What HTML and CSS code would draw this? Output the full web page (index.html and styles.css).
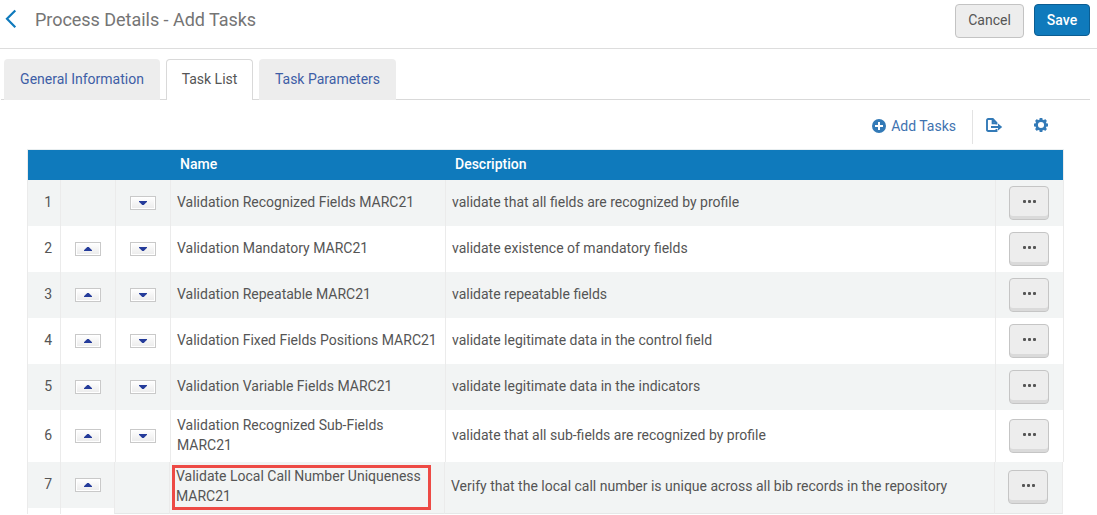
FILE: index.html
```
<!DOCTYPE html>
<html lang="en">
<head>
    <meta charset="UTF-8">
    <meta name="viewport" content="width=device-width, initial-scale=1.0">
    <title>Process Details - Add Tasks</title>
    <link rel="stylesheet" href="styles.css">
</head>
<body>
    <header class="page-header">
        <svg class="back" width="12" height="20" viewBox="0 0 12 20"><path d="M10.3 1.5 2 9.8l8.3 8.4" fill="none" stroke="#0f7abc" stroke-width="2.2"/></svg>
        <h1>Process Details - Add Tasks</h1>
        <button class="btn cancel">Cancel</button>
        <button class="btn save">Save</button>
    </header>

    <nav class="tabs">
        <a class="tab general">General Information</a>
        <a class="tab active">Task List</a>
        <a class="tab params">Task Parameters</a>
    </nav>

    <div class="toolbar">
        <a class="add-tasks">
            <svg width="14" height="14" viewBox="0 0 14 14"><circle cx="7" cy="7" r="7" fill="#337ab7"/><path d="M7 3v8M3 7h8" stroke="#fff" stroke-width="2"/></svg>
            <span>Add Tasks</span>
        </a>
        <svg class="export" width="17" height="15" viewBox="0 0 17 15"><path d="M10.5 11v2H2.2Q1 13 1 11.8V2.2Q1 1 2.2 1h4.6L10.5 4.8V6.5M6.6 1v4.3h4" fill="none" stroke="#337ab7" stroke-width="1.9"/><path d="M5 9h8" stroke="#337ab7" stroke-width="2"/><path d="M12 5.6 16.2 9 12 12.4z" fill="#337ab7"/></svg>
        <svg class="gear" width="14" height="14" viewBox="0 0 14 14"><circle cx="7" cy="7" r="4.4" fill="none" stroke="#337ab7" stroke-width="2.7"/><path d="M5.6 0h2.8v2.5H5.600zM5.600 11.500h2.800V14H5.600zM0 5.600h2.500v2.800H0zM11.500 5.600H14v2.800h-2.500zM1 2.900 2.900 1l2 2L3 4.900zM9.100 3l2-2L13 2.900l-2 2zM1 11.100l2-2L4.900 11l-2 2zM11 9.100l2 2-1.900 1.900-2-2z" fill="#337ab7"/></svg>
    </div>

    <main class="task-table">
        <div class="row head">
            <div></div><div></div><div></div>
            <div>Name</div>
            <div>Description</div>
            <div></div>
        </div>
        <div class="row odd">
            <div class="num">1</div>
            <div class="move"></div>
            <div class="move"><button class="arrow down"></button></div>
            <div class="text">Validation Recognized Fields MARC21</div>
            <div class="text">validate that all fields are recognized by profile</div>
            <div class="actions"><button class="more"><i></i><i></i><i></i></button></div>
        </div>
        <div class="row">
            <div class="num">2</div>
            <div class="move"><button class="arrow up"></button></div>
            <div class="move"><button class="arrow down"></button></div>
            <div class="text">Validation Mandatory MARC21</div>
            <div class="text">validate existence of mandatory fields</div>
            <div class="actions"><button class="more"><i></i><i></i><i></i></button></div>
        </div>
        <div class="row odd">
            <div class="num">3</div>
            <div class="move"><button class="arrow up"></button></div>
            <div class="move"><button class="arrow down"></button></div>
            <div class="text">Validation Repeatable MARC21</div>
            <div class="text">validate repeatable fields</div>
            <div class="actions"><button class="more"><i></i><i></i><i></i></button></div>
        </div>
        <div class="row">
            <div class="num">4</div>
            <div class="move"><button class="arrow up"></button></div>
            <div class="move"><button class="arrow down"></button></div>
            <div class="text">Validation Fixed Fields Positions MARC21</div>
            <div class="text">validate legitimate data in the control field</div>
            <div class="actions"><button class="more"><i></i><i></i><i></i></button></div>
        </div>
        <div class="row odd">
            <div class="num">5</div>
            <div class="move"><button class="arrow up"></button></div>
            <div class="move"><button class="arrow down"></button></div>
            <div class="text">Validation Variable Fields MARC21</div>
            <div class="text">validate legitimate data in the indicators</div>
            <div class="actions"><button class="more"><i></i><i></i><i></i></button></div>
        </div>
        <div class="row tall">
            <div class="num">6</div>
            <div class="move"><button class="arrow up"></button></div>
            <div class="move"><button class="arrow down"></button></div>
            <div class="text">Validation Recognized Sub-Fields<br>MARC21</div>
            <div class="text">validate that all sub-fields are recognized by profile</div>
            <div class="actions"><button class="more"><i></i><i></i><i></i></button></div>
        </div>
        <div class="row odd tall last">
            <div class="num short">7</div>
            <div class="move short"><button class="arrow up"></button></div>
            <div class="move"></div>
            <div class="text marked"><span class="highlight">Validate Local Call Number Uniqueness<br>MARC21</span></div>
            <div class="text">Verify that the local call number is unique across all bib records in the repository</div>
            <div class="actions"><button class="more"><i></i><i></i><i></i></button></div>
        </div>
    </main>
</body>
</html>
```

FILE: styles.css
```
* { box-sizing: border-box; }

body {
    margin: 0; background: #fff; color: #555;
    font-family: Roboto, "Liberation Sans", sans-serif;
    font-size: 14px; line-height: 20px;
    height: 515px; overflow: hidden;
}
button { font: inherit; padding: 0; margin: 0; }
svg { display: block; flex: none; }

.page-header {
    display: flex; align-items: flex-start;
    height: 49px; padding: 4px 7px 0 5px;
    border-bottom: 1px solid #ddd;
}
.back { margin-top: 5px; }
h1 {
    margin: 4px auto 0 18px; font-size: 18px; line-height: 24px;
    font-weight: 400; color: #757575; white-space: nowrap;
    letter-spacing: -0.03px;
}
.btn { border-radius: 4px; }
.cancel {
    width: 69px; height: 34px; margin-right: 10px; padding-bottom: 2px;
    background: #ededed; border: 1px solid #c3c3c3; color: #555;
}
.save {
    width: 56px; height: 32px; font-weight: 500;
    background: #0f7abc; border: 1px solid #0b5d92; color: #fff;
}

.tabs {
    display: flex; height: 51px; width: 1089px; margin-left: 1px;
    padding: 10px 0 0 3px; border-bottom: 1px solid #d9d9d9;
}
.tab {
    height: 41px; padding-top: 10px; text-align: center;
    border-radius: 4px 4px 0 0; background: #ededed; color: #3e5ea6;
}
.general { width: 156px; margin-right: 6px; }
.active {
    width: 87px; margin-right: 6px; padding-top: 9px;
    background: #fff; color: #555;
    border: 1px solid #d9d9d9; border-bottom: 0;
}
.params { width: 137px; }

.toolbar {
    display: flex; align-items: flex-start;
    height: 49px; padding: 10px 49px 0 0; justify-content: flex-end;
    color: #3f73b0;
}
.add-tasks {
    display: flex; align-items: center; gap: 5px;
    height: 34px; padding: 0 16px 2px 0; border-right: 1px solid #e3e3e3;
}
.export { margin: 8px 31px 0 13px; }
.gear { margin-top: 8px; }

.task-table { margin-left: 27px; width: 1037px; border-top: 1px solid #e8eef0; }
.row {
    display: grid; grid-template-columns: 33px 55px 55px 275px 550px 69px;
    height: 46px;
}
.row > div { display: flex; align-items: center; border-left: 1px solid #ebebeb; }
.row > div:last-child { border-right: 1px solid #ebebeb; }
.odd > div { background: #f2f4f4; }
.tall { height: 52px; }

.head { height: 30px; color: #fff; font-weight: 500; }
.row.head > div { background: #0f7abc; border-color: #0f7abc; padding: 0 0 2px 9px; }
.row.head > div:first-child { border-left-color: #ebebeb; }
.row.head > div:last-child { border-right-color: #ebebeb; }

.num { justify-content: flex-end; padding: 0 8px 2px 0; }
.move { justify-content: center; }
.text { padding: 0 0 2px 6px; white-space: nowrap; }
.actions { padding-left: 13px; }

.arrow {
    display: flex; align-items: center; justify-content: center;
    width: 26px; height: 14px; border: 1px solid #c9c9c9;
    background: linear-gradient(#fff, #ebebeb); box-shadow: inset 0 0 0 1px #fff;
}
.arrow::before {
    content: ''; width: 8px; height: 4px; background: #243b9a;
}
.up::before { clip-path: polygon(50% -20%, 110% 100%, -10% 100%); }
.down::before { clip-path: polygon(-10% 0, 110% 0, 50% 120%); }

.more {
    display: flex; justify-content: center; gap: 2px;
    width: 40px; height: 34px; padding-top: 13px;
    background: #ededed; border: 1px solid #c5c5c5; border-radius: 4px;
    box-shadow: inset 0 -3px 0 #dadada;
}
.more i { width: 3px; height: 3px; border-radius: 1px; background: #555; }

/* final row sits one pixel to the left after the second column */
.last { grid-template-columns: 33px 54px 55px 275px 550px 69px; }
.last > div { border-bottom: 1px solid #e6e8e8; }
.last > .text { padding-bottom: 3px; }
.last > .actions { padding-bottom: 1px; }
.last > .short {
    padding-bottom: 8px; border-bottom: 0;
    background: linear-gradient(#f2f4f4 46px, #fff 46px);
}
.last > .move.short { padding: 0 0 6px 1px; }
.last > .marked { align-items: flex-start; padding: 3px 0 0 2px; }
.highlight {
    width: 259px; height: 45px; line-height: 20px;
    border: 3px solid #ed4a45; padding-left: 1px;
}
/* pull the two lines up against the top edge of the box */
.highlight::before { content: ''; display: block; margin-top: -2px; }
```
